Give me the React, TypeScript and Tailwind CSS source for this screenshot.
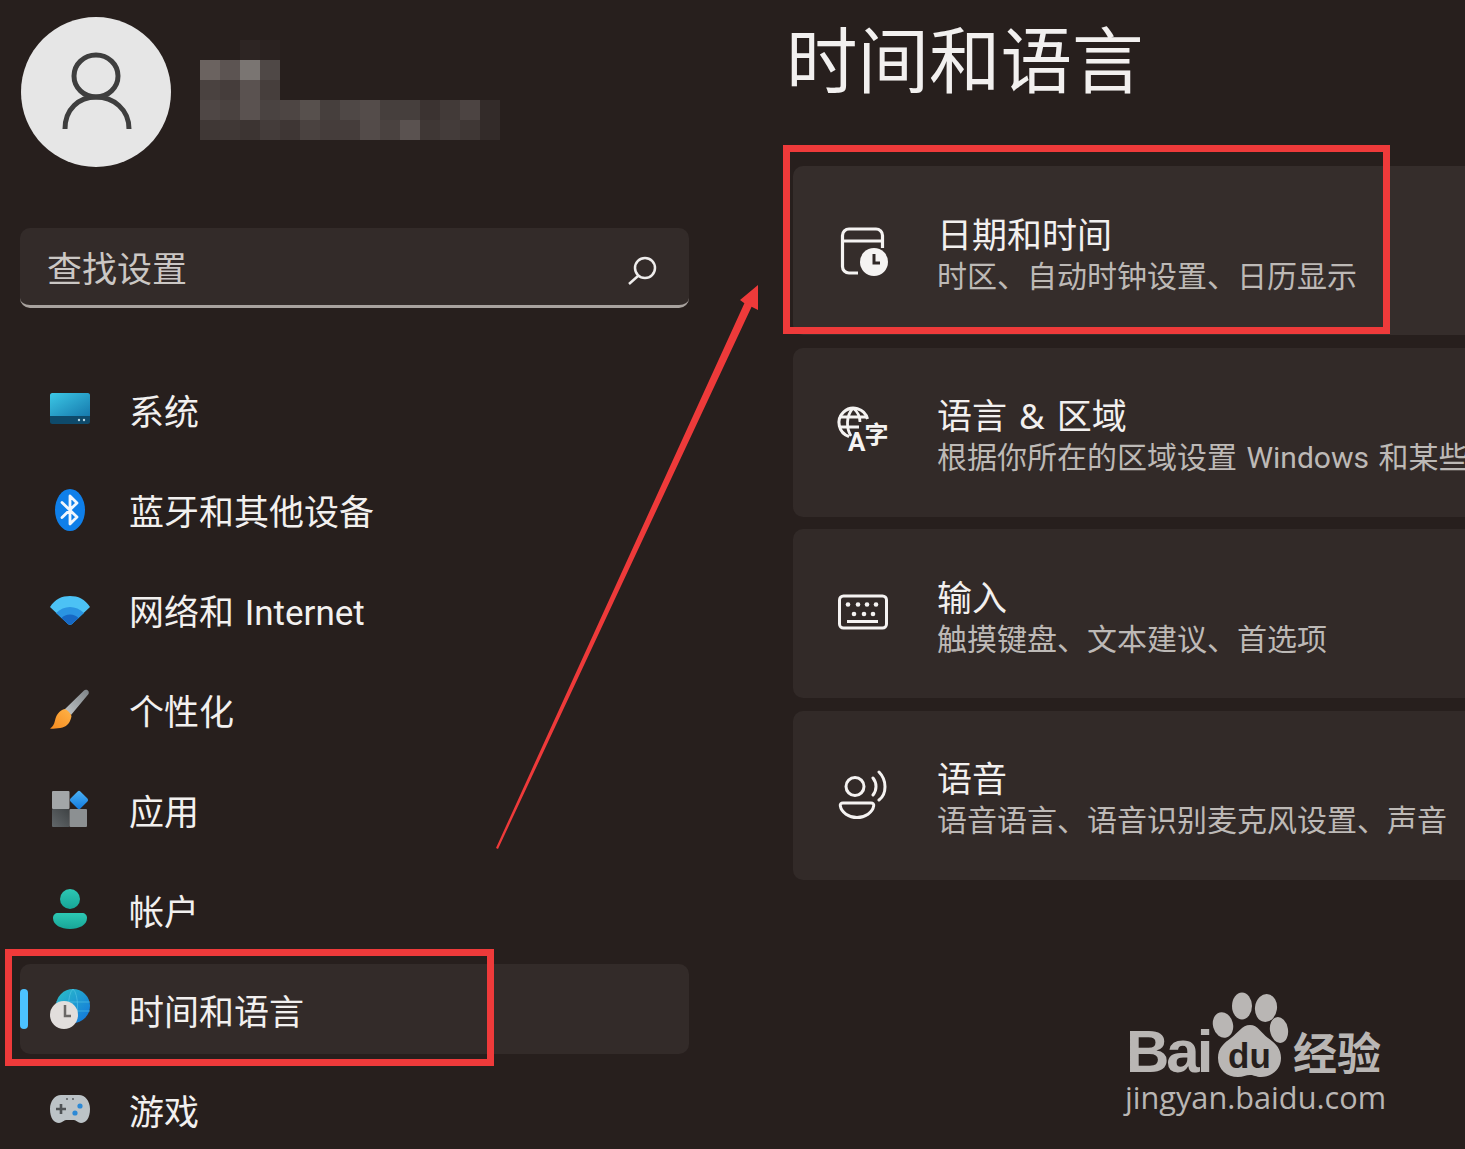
import type { ReactNode } from "react";

const cn = '"Noto Sans CJK SC", sans-serif';

function SystemIcon() {
  return (
    <svg width="40" height="48" viewBox="0 0 40 48">
      <defs>
        <linearGradient id="sys" x1="0" y1="0" x2="1" y2="1">
          <stop offset="0" stopColor="#3cc8e6" />
          <stop offset="1" stopColor="#1679ad" />
        </linearGradient>
      </defs>
      <rect x="0" y="5" width="40" height="31" rx="2.5" fill="#0e4a6b" />
      <path d="M0 7.5a2.5 2.5 0 0 1 2.5-2.5h35a2.5 2.5 0 0 1 2.5 2.5V28H0z" fill="url(#sys)" />
      <circle cx="29" cy="32" r="1.2" fill="#b9d7e4" />
      <circle cx="34" cy="32" r="1.2" fill="#b9d7e4" />
    </svg>
  );
}

function BluetoothIcon() {
  return (
    <svg width="40" height="48" viewBox="0 0 40 48">
      <ellipse cx="20" cy="22" rx="15" ry="21" fill="#0f7fe9" />
      <path d="M12 14.5 27 29 20 36V8l7 7-15 14.5" fill="none" stroke="#f2f7fd" strokeWidth="2.8" strokeLinejoin="round" strokeLinecap="round" />
    </svg>
  );
}

function WifiIcon() {
  return (
    <svg width="40" height="48" viewBox="0 0 40 48">
      <path d="M0 19C5 11 12 8 20 8s15 3 20 11L22 36c-1 1-3 1-4 0z" fill="#4cc2f5" />
      <path d="M6 25c4-4 9-6 14-6s10 2 14 6L22 36c-1 1-3 1-4 0z" fill="#2a94e2" />
      <path d="M11.500 30c2-2 5-3.500 8.500-3.500s6.500 1.500 8.500 3.500L22 36c-1 1-3 1-4 0z" fill="#1668c4" />
    </svg>
  );
}

function BrushIcon() {
  return (
    <svg width="40" height="48" viewBox="0 0 40 48">
      <defs>
        <linearGradient id="brush" x1="0" y1="1" x2="1" y2="0">
          <stop offset="0" stopColor="#c2c6c8" />
          <stop offset="1" stopColor="#7d8387" />
        </linearGradient>
        <linearGradient id="bristle" x1="0" y1="1" x2="1" y2="0">
          <stop offset="0" stopColor="#f58a1f" />
          <stop offset="1" stopColor="#ffb347" />
        </linearGradient>
      </defs>
      <path d="M34 2.500c2-2 6 0 4.500 3.500L21 27l-6.500-5.500z" fill="url(#brush)" />
      <path d="M14.500 21c3 1 6 4 7 7-1 6-4 10-9 11.500-4 1-9 1.500-12.500 1 3-2 4-4 5-8 1-5 4-10 9.500-11.500z" fill="url(#bristle)" />
    </svg>
  );
}

function AppsIcon() {
  return (
    <svg width="40" height="48" viewBox="0 0 40 48">
      <defs>
        <linearGradient id="apps" x1="0" y1="0" x2="1" y2="1">
          <stop offset="0" stopColor="#4fb4f5" />
          <stop offset="1" stopColor="#0f78de" />
        </linearGradient>
        <linearGradient id="appd" x1="1" y1="0" x2="0" y2="1">
          <stop offset="0" stopColor="#3e4244" />
          <stop offset="1" stopColor="#62676a" />
        </linearGradient>
      </defs>
      <rect x="2" y="3" width="17.500" height="18" rx="1" fill="#a3a6a8" />
      <rect x="2" y="21" width="17.500" height="18" rx="1" fill="url(#appd)" />
      <rect x="19.500" y="21" width="17.500" height="18" rx="1" fill="#8c9092" />
      <rect x="22" y="5" width="14" height="14" rx="2" fill="url(#apps)" transform="rotate(45 29 12)" />
    </svg>
  );
}

function AccountIcon() {
  return (
    <svg width="40" height="48" viewBox="0 0 40 48">
      <defs>
        <linearGradient id="acct" x1="0" y1="0" x2="0" y2="1">
          <stop offset="0" stopColor="#2dc8b4" />
          <stop offset="1" stopColor="#17a597" />
        </linearGradient>
      </defs>
      <circle cx="20" cy="11" r="10" fill="url(#acct)" />
      <path d="M8 25h24c3 0 5 2 5 5 0 7-8 11-17 11S3 37 3 30c0-3 2-5 5-5z" fill="url(#acct)" />
    </svg>
  );
}

function TimeIcon() {
  return (
    <svg width="40" height="48" viewBox="0 0 40 48">
      <defs>
        <linearGradient id="globe" x1="0" y1="0" x2="1" y2="1">
          <stop offset="0" stopColor="#2cc0c8" />
          <stop offset="1" stopColor="#1173dc" />
        </linearGradient>
      </defs>
      <circle cx="23" cy="18" r="17" fill="url(#globe)" />
      <path d="M23 1c-6 5-6 29 0 34M23 1c6 5 6 29 0 34M6 14h34M6 23h34" fill="none" stroke="#56c4e6" strokeWidth="1" opacity="0.6" />
      <circle cx="14" cy="27" r="14" fill="#e2dedc" />
      <path d="M15 17v11h6" fill="none" stroke="#6b6866" strokeWidth="2.500" />
    </svg>
  );
}

function GameIcon() {
  return (
    <svg width="40" height="48" viewBox="0 0 40 48">
      <path d="M11 7h18c6 0 11 6 11 14 0 9-4 14-9 14-3 0-5-3-7-3h-8c-2 0-4 3-7 3-5 0-9-5-9-14C0 13 5 7 11 7z" fill="#bcc3c7" />
      <path d="M11 16v10M6 21h10" stroke="#4f5356" strokeWidth="2.600" />
      <circle cx="30" cy="18" r="2.600" fill="#2c89d6" />
      <circle cx="25" cy="25" r="2.600" fill="#2c89d6" />
      <circle cx="17" cy="11" r="0.900" fill="#4f5356" />
      <circle cx="23" cy="11" r="0.900" fill="#4f5356" />
    </svg>
  );
}

function CalendarIcon() {
  return (
    <svg width="50" height="50" viewBox="0 0 50 50">
      <path d="M20 47H11a6.500 6.500 0 0 1-6.500-6.500v-31A6.500 6.500 0 0 1 11 3h27a6.500 6.500 0 0 1 6.500 6.500V22M5 15h39" fill="none" stroke="#f5f3f2" strokeWidth="3.200" />
      <circle cx="36" cy="36" r="14" fill="#f5f3f2" />
      <path d="M36 28v9h6" fill="none" stroke="#302826" strokeWidth="3" />
    </svg>
  );
}

function LanguageIcon() {
  return (
    <svg width="50" height="50" viewBox="0 0 50 50" fontFamily={cn} className="overflow-visible">
      <path d="M29.500 12A14.500 14.500 0 1 0 11 29.500" fill="none" stroke="#f5f3f2" strokeWidth="3" />
      <path d="M15 1c-7 8-7 20-2 28M15 1c5 4 7 9 7 14M1 10h28M1 20h20" fill="none" stroke="#f5f3f2" strokeWidth="2.800" />
      <text x="10" y="44" fontSize="26" fontWeight="700" fontFamily='"Roboto", sans-serif' fill="#f5f3f2">A</text>
      <text x="26.500" y="36" fontSize="24" fontWeight="700" fill="#f5f3f2">字</text>
    </svg>
  );
}

function KeyboardIcon() {
  const top = [10, 20, 29, 38];
  const mid = [16, 26, 35];
  return (
    <svg width="50" height="50" viewBox="0 0 50 50">
      <rect x="1.500" y="7" width="47" height="32" rx="4" fill="none" stroke="#f5f3f2" strokeWidth="3" />
      {top.map((x) => (
        <circle key={x} cx={x} cy="15.500" r="2.300" fill="#f5f3f2" />
      ))}
      {mid.map((x) => (
        <circle key={x} cx={x} cy="25" r="2.300" fill="#f5f3f2" />
      ))}
      <path d="M9 32.500h31" stroke="#f5f3f2" strokeWidth="3" />
    </svg>
  );
}

function VoiceIcon() {
  return (
    <svg width="50" height="50" viewBox="0 0 50 50">
      <circle cx="17" cy="16.500" r="9" fill="none" stroke="#f5f3f2" strokeWidth="3" />
      <path d="M5 33h28c2 0 3 1 2.700 2.800C34.700 42.500 27 47.500 19 47.500S3.300 42.500 2.300 35.800C2 34 3 33 5 33z" fill="none" stroke="#f5f3f2" strokeWidth="3" />
      <path d="M35 8c4 5 4 12 0 17M41 2c8 8 8 22 0 28" fill="none" stroke="#f5f3f2" strokeWidth="3" strokeLinecap="round" />
    </svg>
  );
}

const navItems: { label: string; icon: ReactNode; active?: boolean }[] = [
  { label: "系统", icon: <SystemIcon /> },
  { label: "蓝牙和其他设备", icon: <BluetoothIcon /> },
  { label: "网络和 Internet", icon: <WifiIcon /> },
  { label: "个性化", icon: <BrushIcon /> },
  { label: "应用", icon: <AppsIcon /> },
  { label: "帐户", icon: <AccountIcon /> },
  { label: "时间和语言", icon: <TimeIcon />, active: true },
  { label: "游戏", icon: <GameIcon /> },
];

const cards = [
  { title: "日期和时间", sub: "时区、自动时钟设置、日历显示", icon: <CalendarIcon />, bg: "bg-[#352d2b]" },
  { title: "语言 & 区域", sub: "根据你所在的区域设置 Windows 和某些设置的格式", icon: <LanguageIcon />, bg: "bg-[#322a28]" },
  { title: "输入", sub: "触摸键盘、文本建议、首选项", icon: <KeyboardIcon />, bg: "bg-[#322a28]" },
  { title: "语音", sub: "语音语言、语音识别麦克风设置、声音", icon: <VoiceIcon />, bg: "bg-[#322a28]" },
];

const mosaic = [
  ["#6b6360", "#5c5452", "#7a7572", "#4f4846"],
  ["#4a4240", "#453d3b", "#5a5250", "#463e3c"],
  ["#4f4745", "#4a4240", "#5a5250", "#4a4341", "#4d4543", "#57504d", "#463f3d", "#4f4846", "#544c4a", "#463f3d", "#463f3d", "#3b3331", "#423a38", "#4c4442", "#332b29"],
  ["#3f3735", "#403836", "#3c3432", "#443c3a", "#3e3634", "#4a4240", "#453d3b", "#453d3b", "#534b49", "#4a4240", "#5a5250", "#3f3735", "#443c3a", "#3f3735", "#332b29"],
];

function Mosaic() {
  return (
    <div className="mt-[23px] flex flex-col">
      <div className="ml-[40px] flex">
        <div className="h-[20px] w-[20px] bg-[#2d2523]" />
        <div className="h-[20px] w-[20px] bg-[#2a2220]" />
      </div>
      {mosaic.map((row, i) => (
        <div key={i} className="flex">
          {row.map((c, j) => (
            <div key={j} className="h-[20px] w-[20px]" style={{ backgroundColor: c }} />
          ))}
        </div>
      ))}
    </div>
  );
}

function Watermark() {
  return (
    <div className="absolute left-[1126px] top-[990px] flex w-[265px] flex-col text-[#b9b6b4]">
      <div className="flex h-[90px] items-start">
        <span className="mt-[36px] w-[86px] shrink-0 font-['Liberation_Sans',sans-serif] text-[60px] font-bold leading-[52px] tracking-[-3px]">Bai</span>
        <svg width="78" height="90" viewBox="0 0 78 90" className="shrink-0" fill="#b9b6b4">
          <ellipse cx="11" cy="35" rx="10" ry="13" transform="rotate(-15 11 35)" />
          <ellipse cx="30" cy="16" rx="10" ry="13.500" />
          <ellipse cx="54" cy="18" rx="11" ry="14" transform="rotate(8 54 18)" />
          <ellipse cx="67" cy="40" rx="9" ry="13" transform="rotate(-10 67 40)" />
          <path d="M38 35c8 0 11 8 18 13 7 5 13 10 13 20 0 12-10 19-20 19-5 0-7-2-11-2s-7 2-12 2c-11 0-20-7-20-19 0-10 6-15 13-20 7-5 11-13 19-13z" />
          <text x="16" y="78" fontSize="35" fontWeight="700" fill="#271f1d" fontFamily='"Liberation Sans", sans-serif'>du</text>
        </svg>
        <span className="ml-[3px] mt-[38px] text-[44px] font-bold leading-[46px]" style={{ fontFamily: cn }}>经验</span>
      </div>
      <div className="-ml-[1px] whitespace-nowrap font-['Open_Sans',sans-serif] text-[30.700px] leading-[34px]">jingyan.baidu.com</div>
    </div>
  );
}

export default function App() {
  return (
    <div className="relative flex h-[1149px] w-[1465px] overflow-hidden bg-[#271f1d] font-['Roboto','Noto_Sans_CJK_SC',sans-serif] text-[#f2f0ef]">
      <aside className="flex w-[793px] shrink-0 flex-col pl-[20px] pt-[17px]">
        <div className="flex shrink-0 gap-[29px] pl-[1px]">
          <div className="flex h-[150px] w-[150px] items-center justify-center rounded-full bg-[#e6e6e6]">
            <svg width="76" height="84" viewBox="0 0 76 84" fill="none" stroke="#3e3e3e" strokeWidth="5">
              <ellipse cx="38" cy="26" rx="22" ry="21" />
              <path d="M7 79c0-20 14-32 31-32s33 12 33 32" />
            </svg>
          </div>
          <Mosaic />
        </div>

        <div className="mt-[61px] flex h-[80px] w-[669px] shrink-0 items-center justify-between rounded-[10px] border-b-[3px] border-[#a8a29e] bg-[#332b29] pl-[27px] pr-[32px] pt-[8px]">
          <span className="text-[35px] leading-none text-[#cbc7c4]">查找设置</span>
          <svg width="30" height="30" viewBox="0 0 30 30" fill="none" stroke="#efedec" strokeWidth="2.500">
            <circle cx="18" cy="12" r="10" />
            <path d="M11 20 2 28" />
          </svg>
        </div>

        <nav className="mt-[56px] flex w-[669px] shrink-0 flex-col gap-[10px]">
          {navItems.map((it) => (
            <div
              key={it.label}
              className={
                it.active
                  ? "relative flex h-[90px] shrink-0 items-center gap-[39px] rounded-[10px] bg-[#332b29] pl-[30px] pt-[6px]"
                  : "relative flex h-[90px] shrink-0 items-center gap-[39px] pl-[30px] pt-[6px]"
              }
            >
              {it.active ? <div className="absolute left-0 top-[25px] h-[40px] w-[8px] rounded-full bg-[#4cc2ff]" /> : null}
              {it.icon}
              <span className="mt-[2px] whitespace-nowrap text-[35px] leading-none [word-spacing:2px]">{it.label}</span>
            </div>
          ))}
        </nav>
      </aside>

      <main className="flex min-w-0 flex-1 flex-col pt-[23px]">
        <h1 className="-ml-[7px] h-[80px] text-[71.500px] font-normal leading-[80px]">时间和语言</h1>
        <div className="mt-[63px] flex w-[760px] flex-col gap-[12.500px]">
          {cards.map((c) => (
            <div key={c.title} className={`flex h-[169px] items-center gap-[49px] rounded-[10px] pl-[45px] ${c.bg}`}>
              <div className="shrink-0">{c.icon}</div>
              <div className="mt-[10px] flex flex-col whitespace-nowrap">
                <div className="font-['Noto_Sans','Noto_Sans_CJK_SC',sans-serif] text-[35px] leading-[42px] [word-spacing:3px]">{c.title}</div>
                <div className="text-[30px] leading-[42px] text-[#bdb9b6] [word-spacing:2px]">{c.sub}</div>
              </div>
            </div>
          ))}
        </div>
      </main>

      {/* annotations drawn over the screenshot */}
      <div className="absolute left-[783px] top-[145px] h-[189px] w-[607px] border-[7px] border-[#ee3a3a]" />
      <div className="absolute left-[5px] top-[949px] h-[117px] w-[489px] border-[7px] border-[#ee3a3a]" />
      <svg className="absolute left-[490px] top-[280px]" width="275" height="575" viewBox="0 0 275 575">
        <path d="M6 568 254.400 23.300 250 20 268 5 268 30 261.600 26.700 8 569z" fill="#ee3a3a" />
      </svg>
      <Watermark />
    </div>
  );
}
